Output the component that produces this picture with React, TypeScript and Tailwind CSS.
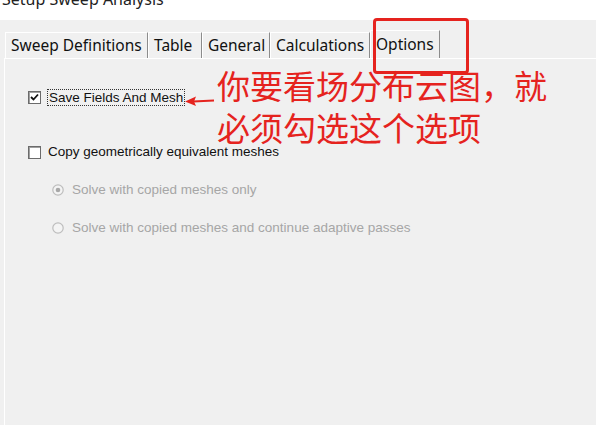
import React from 'react';

const tabs = [
  { label: 'Sweep Definitions', w: 'w-[143px]' },
  { label: 'Table', w: 'w-[54px]' },
  { label: 'General', w: 'w-[68px]' },
  { label: 'Calculations', w: 'w-[100px]' },
  { label: 'Options', w: 'w-[70px]' },
];

function Checkbox({ checked }: { checked?: boolean }) {
  return (
    <span className="flex h-[13px] w-[13px] items-center justify-center border border-[#6b6b6b] bg-white shadow-[inset_1px_1px_0_#a0a0a0]">
      {checked && (
        <svg width="9" height="9" viewBox="0 0 9 9">
          <path d="M1 4 L3.5 6.5 L8 1.5" stroke="#111" strokeWidth="1.8" fill="none" />
        </svg>
      )}
    </span>
  );
}

function Radio({ selected }: { selected?: boolean }) {
  return (
    <svg width="12" height="12" viewBox="0 0 12 12">
      <circle cx="6" cy="6" r="5.2" fill="#f4f4f4" stroke="#bdbdbd" strokeWidth="1.2" />
      {selected && <circle cx="6" cy="6" r="2.3" fill="#a8a8a8" />}
    </svg>
  );
}

export default function App() {
  return (
    <div className="relative flex h-[425px] w-[596px] flex-col overflow-hidden bg-[#f0f0f0] font-['Liberation_Sans',Arial,sans-serif]">
      {/* window title, cut off at the top */}
      <div className="h-[20px] shrink-0 bg-white">
        <div className="-mt-[11px] pl-[2px] font-['Noto_Sans',sans-serif] text-[16px] leading-[20px] text-[#222]">
          Setup Sweep Analysis
        </div>
      </div>

      {/* tab strip */}
      <div className="flex h-[38px] shrink-0 items-end pl-[5px]">
        {tabs.map((t, i) => {
          const active = i === tabs.length - 1;
          return (
            <div
              key={t.label}
              className={
                (active ? 'h-[28px] ' : 'h-[26px] ') +
                t.w +
                ' flex items-center border-t border-l border-white border-r border-r-[#8c8c8c] pl-[5px] font-["Noto_Sans",sans-serif] text-[15.5px] text-[#111]'
              }
            >
              {t.label}
            </div>
          );
        })}
      </div>

      {/* tab page */}
      <div className="ml-[4px] flex-1 border-t border-l border-white">
        <div className="flex flex-col pl-[23px] pt-[32px] text-[13.5px]">
          <div className="flex h-[13px] items-center">
            <Checkbox checked />
            <span className="ml-[6px] border border-dotted border-[#333] px-[1px] leading-[15px] text-[#111]">
              Save Fields And Mesh
            </span>
          </div>

          <div className="mt-[42px] flex h-[13px] items-center">
            <Checkbox />
            <span className="ml-[7px] text-[#111]">Copy geometrically equivalent meshes</span>
          </div>

          <div className="ml-[24px] mt-[25px] flex h-[12px] items-center">
            <Radio selected />
            <span className="ml-[8px] text-[#a6a6a6]">Solve with copied meshes only</span>
          </div>

          <div className="ml-[24px] mt-[26px] flex h-[12px] items-center">
            <Radio />
            <span className="ml-[8px] text-[#a6a6a6]">Solve with copied meshes and continue adaptive passes</span>
          </div>
        </div>
      </div>

      {/* annotation: red frame round the Options tab */}
      <div className="absolute left-[373px] top-[18px] h-[56px] w-[96px] rounded-[4px] border-[3px] border-[#e5231e]" />

      {/* annotation: arrow */}
      <svg className="absolute left-[184px] top-[94px]" width="32" height="14" viewBox="0 0 32 14">
        <path d="M30 6.5 L9 7.5" stroke="#e5231e" strokeWidth="2" />
        <path d="M1 7.5 L12 2.5 L10 7.5 L12 12 Z" fill="#e5231e" />
      </svg>

      {/* annotation: note */}
      <div className="absolute left-[217px] top-[64px] font-['Noto_Sans_CJK_SC',sans-serif] text-[33px] leading-[42px] text-[#e5231e]">
        <div>你要看场分布云图，就</div>
        <div>必须勾选这个选项</div>
      </div>
    </div>
  );
}
